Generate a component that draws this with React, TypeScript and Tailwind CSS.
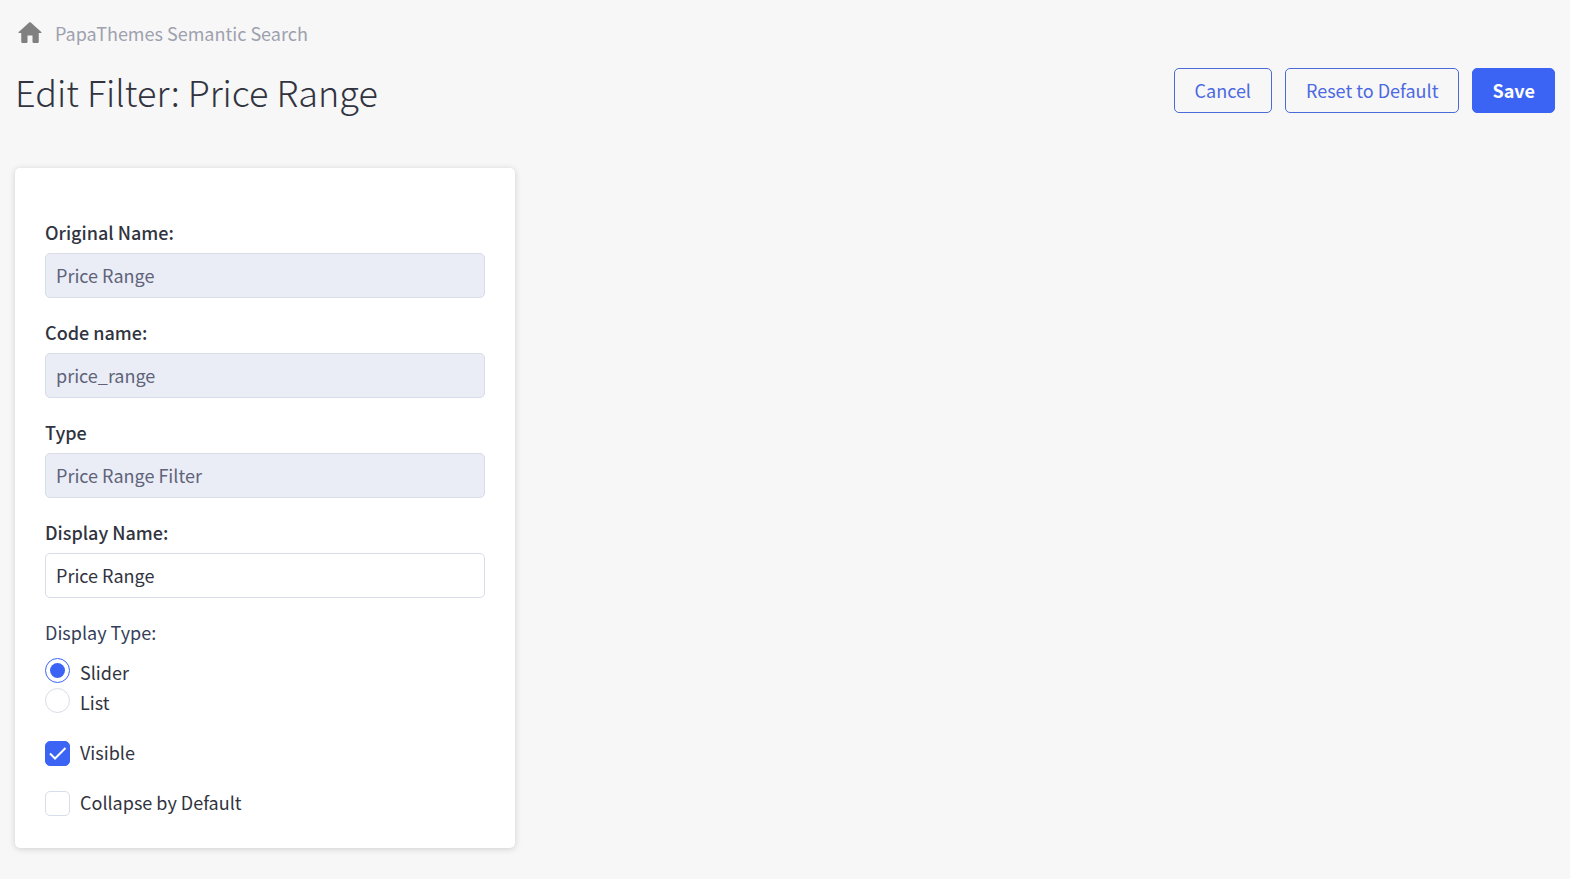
import { useState, type ReactNode } from 'react'
import { clsx } from 'clsx'

const readOnlyFields = [
    { id: 'original-name', label: 'Original Name:', value: 'Price Range' },
    { id: 'code-name', label: 'Code name:', value: 'price_range' },
    { id: 'type', label: 'Type', value: 'Price Range Filter' },
]

function HomeIcon() {
    return (
        <svg viewBox="0 0 24 24" className="size-[30px] fill-[#808080]" aria-hidden="true">
            <path d="M10 19v-5h4v5c0 .55.45 1 1 1h3c.55 0 1-.45 1-1v-7h1.7c.46 0 .68-.57.33-.87L12.67 3.6c-.38-.34-.96-.34-1.34 0l-8.36 7.53c-.34.3-.13.87.33.87H5v7c0 .55.45 1 1 1h3c.55 0 1-.45 1-1z" />
        </svg>
    )
}

function Button({ primary, children }: { primary?: boolean; children: ReactNode }) {
    return (
        <button
            type="button"
            className={clsx(
                'h-[45px] rounded-[5px] border pb-0.5 whitespace-nowrap',
                primary
                    ? 'border-[#3c64f4] bg-[#3c64f4] px-[19px] font-bold text-white'
                    : 'border-[#4b6bd8] px-5 text-[#4b69e2]',
            )}
        >
            {children}
        </button>
    )
}

type FieldProps = {
    id: string
    label: string
    value: string
    onChange?: (value: string) => void
}

function Field({ id, label, value, onChange }: FieldProps) {
    return (
        <div className="flex flex-col gap-[7px]">
            <label htmlFor={id} className="font-medium">{label}</label>
            <input
                id={id}
                type="text"
                value={value}
                disabled={!onChange}
                onChange={(e) => onChange?.(e.target.value)}
                className="h-[45px] w-full rounded-[5px] border border-[#d9dce9] bg-white px-2.5 pb-0.5 disabled:bg-[#eaedf5] disabled:text-[#5e637a]"
            />
        </div>
    )
}

type RadioProps = {
    id: string
    label: string
    checked: boolean
    onChange: () => void
}

function Radio({ id, label, checked, onChange }: RadioProps) {
    return (
        <div className="flex h-[30px] items-start gap-2.5">
            <input
                id={id}
                type="radio"
                name="display-type"
                checked={checked}
                onChange={onChange}
                className="grid size-[25px] appearance-none place-items-center rounded-full border border-[#d9dce9] bg-white before:size-[15px] before:rounded-full checked:border-[#3c64f4] checked:before:bg-[#3c64f4]"
            />
            <label htmlFor={id}>{label}</label>
        </div>
    )
}

type CheckboxProps = {
    id: string
    label: string
    checked: boolean
    onChange: (checked: boolean) => void
}

function Checkbox({ id, label, checked, onChange }: CheckboxProps) {
    return (
        <div className="flex h-[30px] items-center gap-2.5">
            <span className="grid size-[25px]">
                <input
                    id={id}
                    type="checkbox"
                    checked={checked}
                    onChange={(e) => onChange(e.target.checked)}
                    className="col-start-1 row-start-1 size-[25px] appearance-none rounded-[5px] border border-[#d9dce9] bg-white checked:border-[#3c64f4] checked:bg-[#3c64f4]"
                />
                {checked && (
                    <svg viewBox="0 0 25 25" className="pointer-events-none col-start-1 row-start-1 size-[25px] fill-none stroke-white stroke-2" aria-hidden="true">
                        <path d="M5 12.5l5 5L20.5 7" />
                    </svg>
                )}
            </span>
            <label htmlFor={id} className="self-start">{label}</label>
        </div>
    )
}

export default function App() {
    const [displayName, setDisplayName] = useState('Price Range')
    const [displayType, setDisplayType] = useState('slider')
    const [visible, setVisible] = useState(true)
    const [collapsed, setCollapsed] = useState(false)

    return (
        <main className="min-h-screen bg-[#f7f7f7] px-[15px] py-[18px] font-['Noto_Sans_CJK_SC',sans-serif] text-[18px] leading-7 text-[#313440]">
            <nav className="flex items-center gap-2.5">
                <a href="#" aria-label="Home"><HomeIcon /></a>
                <a href="#" className="text-[#9ea1ae]">PapaThemes Semantic Search</a>
            </nav>

            <header className="mt-5 flex flex-wrap items-start justify-between gap-4">
                <h1 className="text-[36px] leading-[46px] font-extralight">Edit Filter: Price Range</h1>
                <div className="flex gap-[13px]">
                    <Button>Cancel</Button>
                    <Button>Reset to Default</Button>
                    <Button primary>Save</Button>
                </div>
            </header>

            <form className="mt-[54px] flex max-w-[500px] flex-col gap-5 rounded-[5px] bg-white px-[30px] pt-[50px] pb-[30px] shadow-[0_1px_6px_rgba(49,52,64,0.2)]">
                {readOnlyFields.map((field) => (
                    <Field key={field.id} {...field} />
                ))}
                <Field id="display-name" label="Display Name:" value={displayName} onChange={setDisplayName} />

                <fieldset>
                    <legend className="mb-3 text-[#34405a]">Display Type:</legend>
                    <Radio id="slider" label="Slider" checked={displayType === 'slider'} onChange={() => setDisplayType('slider')} />
                    <Radio id="list" label="List" checked={displayType === 'list'} onChange={() => setDisplayType('list')} />
                </fieldset>

                <Checkbox id="visible" label="Visible" checked={visible} onChange={setVisible} />
                <Checkbox id="collapse" label="Collapse by Default" checked={collapsed} onChange={setCollapsed} />
            </form>
        </main>
    )
}
